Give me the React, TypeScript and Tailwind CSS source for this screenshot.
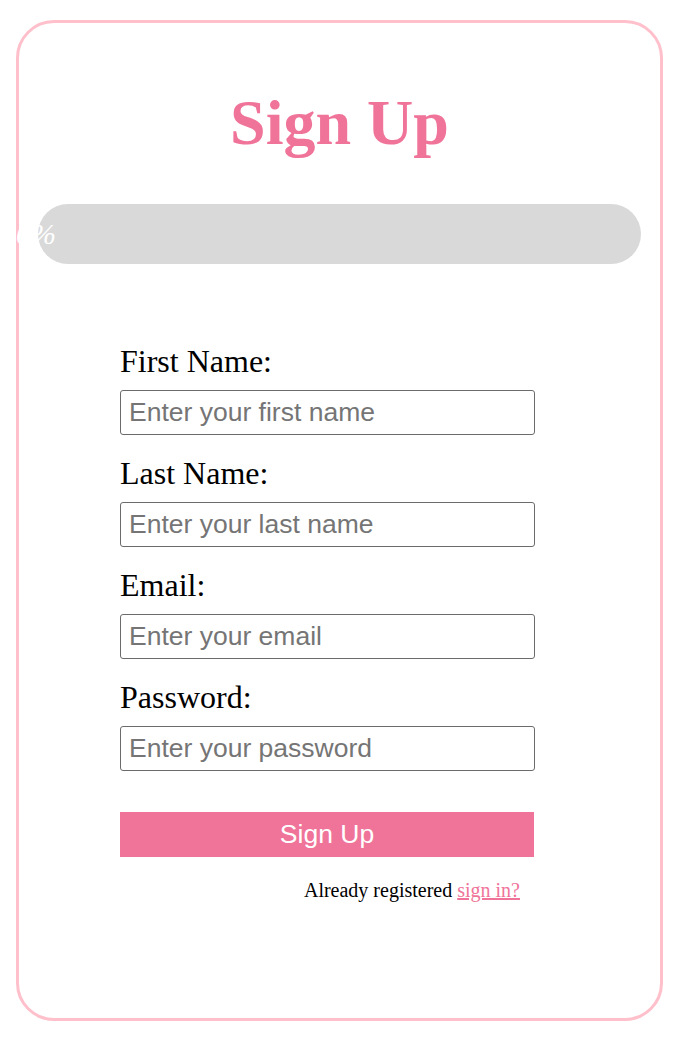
import React from "react";

const fields = [
  { label: "First Name:", placeholder: "Enter your first name", type: "text" },
  { label: "Last Name:", placeholder: "Enter your last name", type: "text" },
  { label: "Email:", placeholder: "Enter your email", type: "email" },
  { label: "Password:", placeholder: "Enter your password", type: "password" },
];

const serif = "font-['Liberation_Serif','Times_New_Roman',serif]";
const sans = "font-['Liberation_Sans',Arial,sans-serif]";

export default function App() {
  return (
    <div className="w-[692px] h-[1042px] bg-white pt-5 pl-4">
      <div className="relative w-[647px] h-[1001px] border-[3px] border-[#ffc0cb] rounded-[38px] flex flex-col">
        <h1 className={`${serif} mt-[68px] text-center text-[64px] leading-none font-bold text-[#f07399]`}>
          Sign Up
        </h1>

        <div className="relative mt-[49px] mx-[19px] h-[60px] rounded-full bg-[#d9d9d9]">
          <span
            className={`${serif} absolute left-[-2px] top-1/2 z-10 -translate-x-1/2 -translate-y-1/2 text-[30px] leading-none italic text-white`}
          >
            0%
          </span>
        </div>

        <form className="mt-[81px] ml-[101px] w-[415px] flex flex-col">
          {fields.map((f, i) => (
            <div key={f.label} className={`flex flex-col ${i > 0 ? "mt-[22px]" : ""}`}>
              <label className={`${serif} text-[32px] leading-none text-black`}>{f.label}</label>
              <input
                type={f.type}
                placeholder={f.placeholder}
                className={`${sans} mt-[13px] h-[45px] w-[415px] rounded-[3px] border border-[#6b6b6b] px-2 text-[26.5px] text-black placeholder:text-[#757575] outline-none`}
              />
            </div>
          ))}

          <button
            type="button"
            className={`${sans} mt-[41px] h-[45px] w-[414px] bg-[#f07399] text-[26.5px] text-white`}
          >
            Sign Up
          </button>

          <p className={`${serif} mt-[23px] pr-[15px] text-right text-[20px] leading-none text-black`}>
            Already registered{" "}
            <a href="#" className="text-[#f07399] underline">
              sign in?
            </a>
          </p>
        </form>
      </div>
    </div>
  );
}
